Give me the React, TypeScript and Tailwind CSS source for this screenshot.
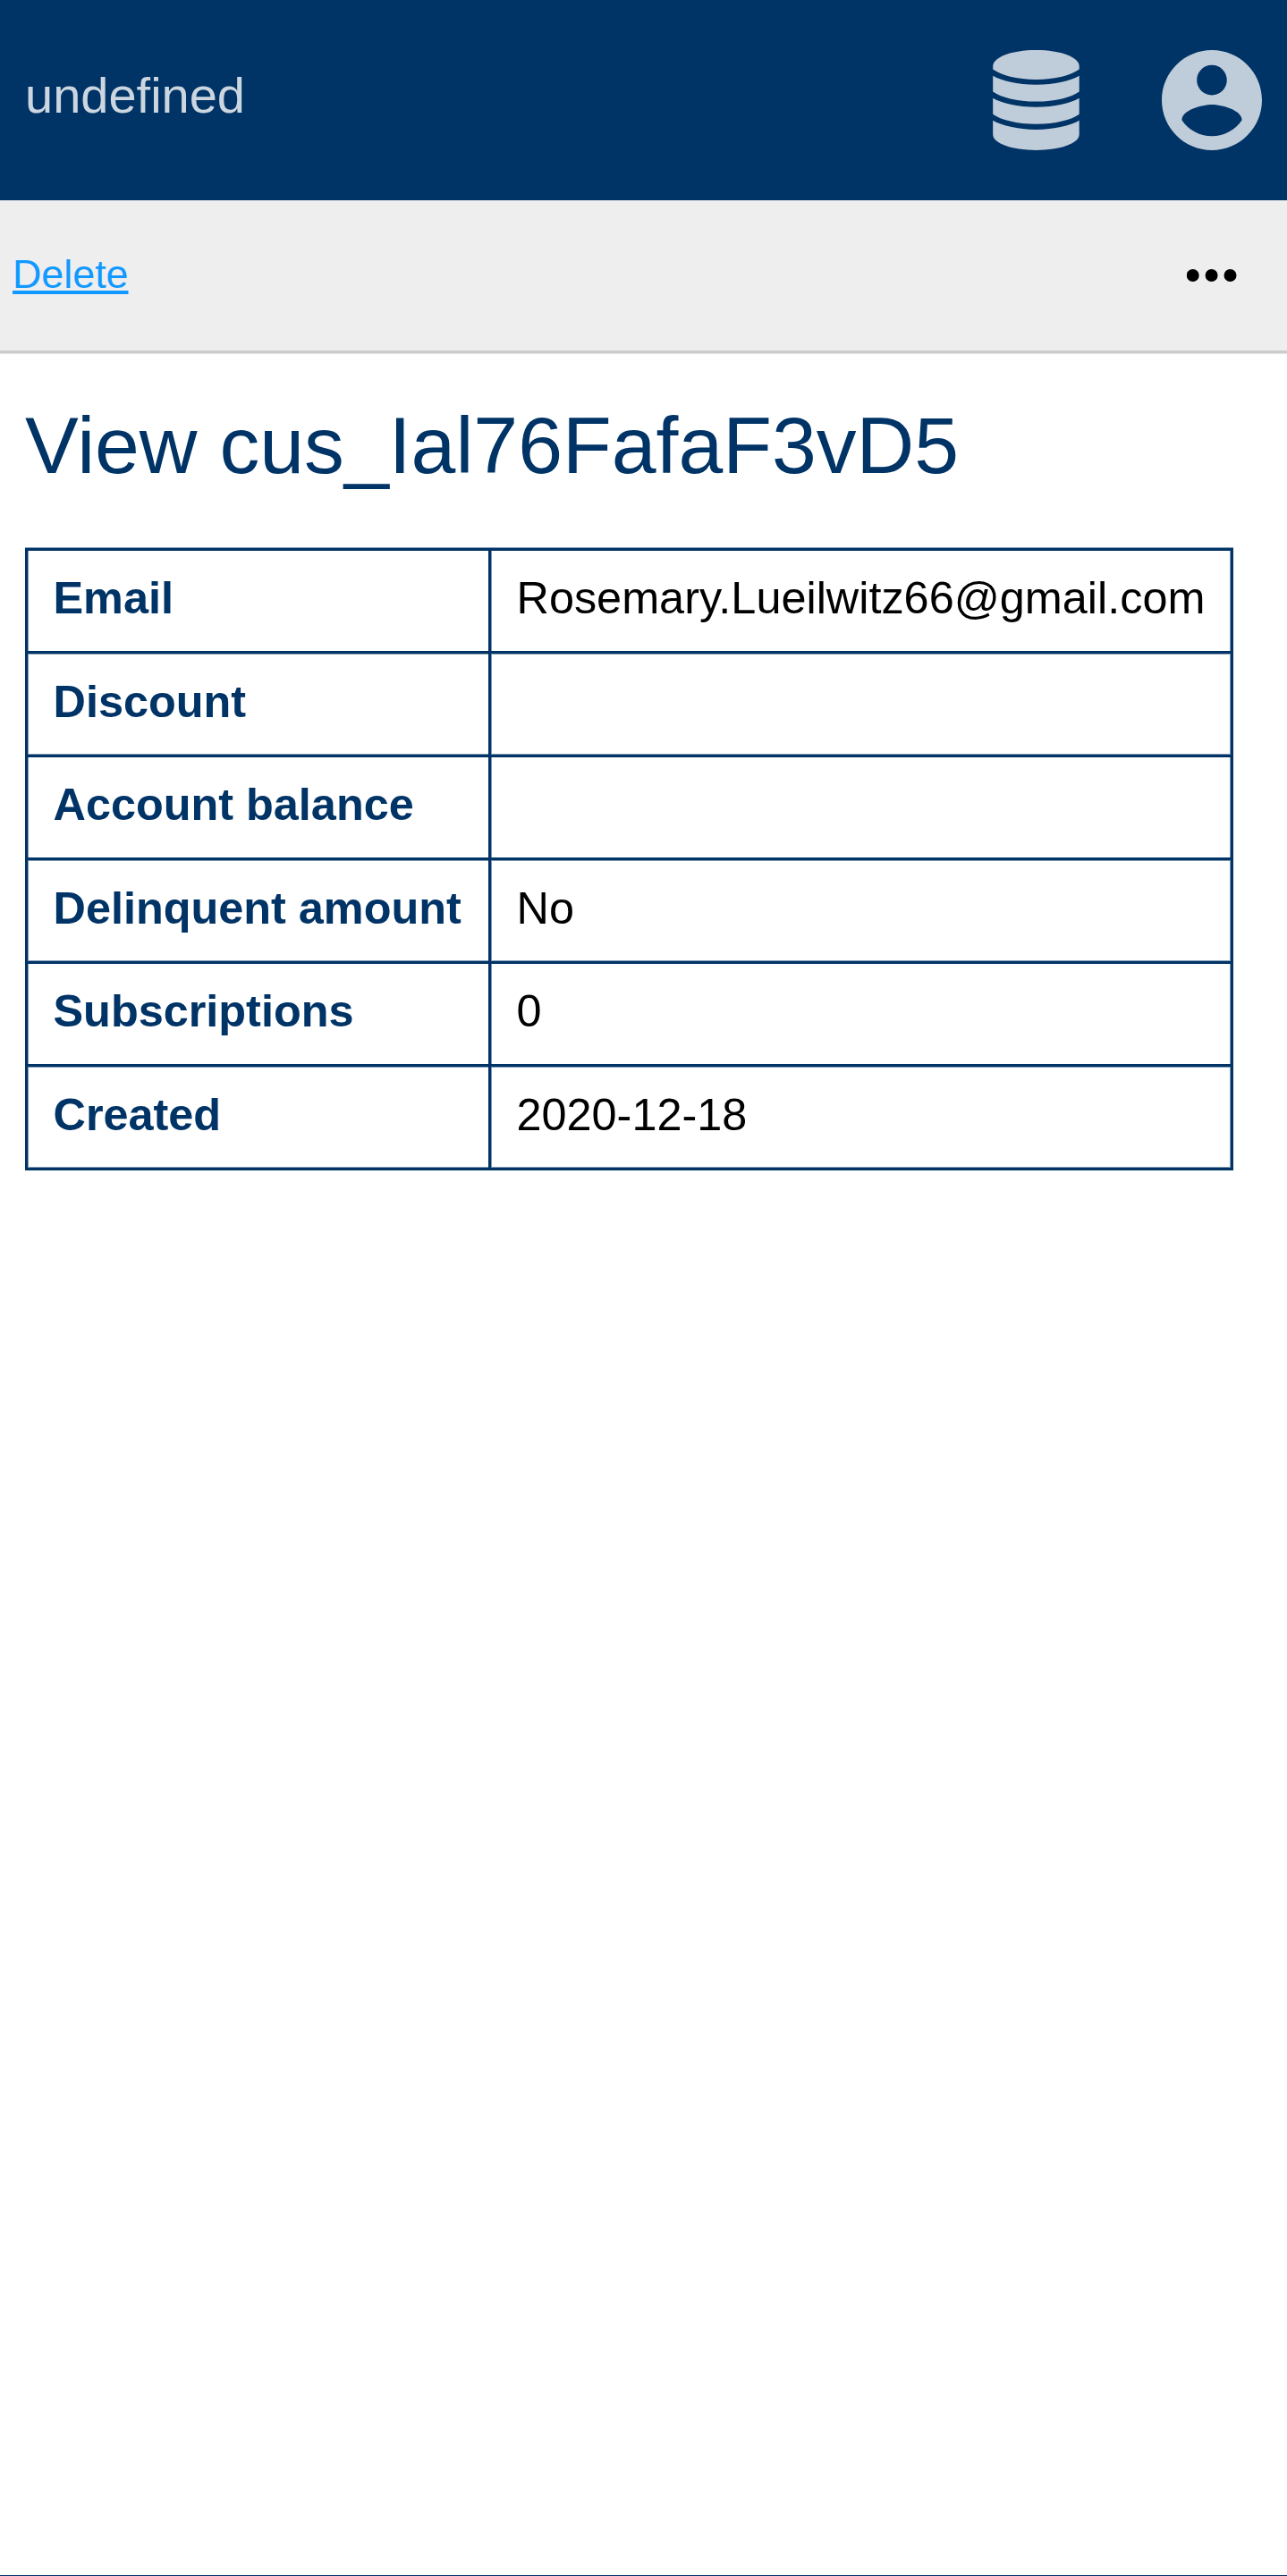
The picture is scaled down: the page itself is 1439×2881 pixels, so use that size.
const rows = [
  { label: 'Email', value: 'Rosemary.Lueilwitz66@gmail.com' },
  { label: 'Discount', value: '' },
  { label: 'Account balance', value: '' },
  { label: 'Delinquent amount', value: 'No' },
  { label: 'Subscriptions', value: '0' },
  { label: 'Created', value: '2020-12-18' },
];

function DatabaseIcon() {
  return (
    <svg className="h-[112px] w-[97px]" viewBox="0 0 97 112" fill="#bfccd9">
      <path d="M0.200 18C0.200 8 21 0 48.500 0S96.700 8 96.700 18V21.500C88 28 70 33 48.500 33S9 28 0.200 21.500Z" />
      <path d="M0.200 28.700C9 34 28 38.700 48.500 38.700S88 34 96.700 28.700V46.500C88 53 70 57.600 48.500 57.600S9 53 0.200 46.500Z" />
      <path d="M0.200 53.800C9 59 28 63.800 48.500 63.800S88 59 96.700 53.800V71.700C88 78 70 82.700 48.500 82.700S9 78 0.200 71.700Z" />
      <path d="M0.200 78.800C9 84 28 89 48.500 89S88 84 96.700 78.800V94.500C96.700 104 76 111.900 48.500 111.900S0.200 104 0.200 94.500Z" />
    </svg>
  );
}

function AccountIcon() {
  return (
    <svg className="h-[112px] w-[112px]" viewBox="2 2 20 20" fill="#bfccd9">
      <path d="M12 2C6.480 2 2 6.480 2 12s4.480 10 10 10 10-4.480 10-10S17.520 2 12 2zm0 3c1.660 0 3 1.340 3 3s-1.340 3-3 3-3-1.340-3-3 1.340-3 3-3zm0 14.200c-2.500 0-4.710-1.280-6-3.220.030-1.990 4-3.080 6-3.080 1.990 0 5.970 1.090 6 3.080-1.290 1.940-3.500 3.220-6 3.220z" />
    </svg>
  );
}

/** Horizontal rule whose inner edge is softened between the column borders. */
function Rule({ soft }: { soft: 'top' | 'bottom' }) {
  const edge = soft === 'top' ? 'border-t border-[#8099b3]' : 'border-b border-[#8099b3]';
  return (
    <div className="flex h-[4px] bg-[#003366] pl-[3px] pr-[3px]">
      <div className={`w-[515px] ${edge}`} />
      <div className={`ml-[3px] w-[827px] ${edge}`} />
    </div>
  );
}

export default function App() {
  return (
    <div className="flex h-[2881px] w-[1439px] flex-col overflow-hidden border-b border-[#003366] bg-white font-['Liberation_Sans',Arial,sans-serif]">
      <header className="flex h-[224px] shrink-0 items-start justify-between bg-[#003366] px-[28px]">
        <div className="mt-[74px] text-[56px] leading-[65px] text-[#ccd6e0]">undefined</div>
        <div className="mt-[56px] flex gap-[92px]">
          <DatabaseIcon />
          <AccountIcon />
        </div>
      </header>
      <nav className="h-[172px] shrink-0 border-b border-[#e5e5e5] bg-[#eeeeee]">
        <div className="flex h-[171px] items-start justify-between border-b-[3px] border-[#cccccc] pl-[14px] pr-[56px]">
          <a className="mt-[56px] text-[44.8px] leading-[52px] text-[#1199ff] underline decoration-[4px] underline-offset-[3px]">Delete</a>
          <svg className="mt-[77px] h-[14px] w-[56px]" viewBox="0 0 56 14">
            <circle cx="6.700" cy="7" r="7" />
            <circle cx="27.600" cy="7" r="7" />
            <circle cx="48.500" cy="7" r="7" />
          </svg>
        </div>
      </nav>
      <main className="px-[28px] pt-[50px]">
        <h1 className="h-[166px] text-[89.6px] leading-[104px] text-[#003366]">View cus_Ial76FafaF3vD5</h1>
        <div className="w-[1351px] text-[50.4px] leading-[59px]">
          <div className="h-[4px] border-t border-[#8099b3] bg-[#003366]" />
          {rows.map((row, i) => (
            <div key={row.label}>
              <div className={i % 2 === 0 ? 'flex h-[112px]' : 'flex h-[111px]'}>
                <div className="w-[4px] border-r border-[#8099b3] bg-[#003366]" />
                <div className="w-[514px] whitespace-nowrap pl-[27.5px] pt-[23px] font-bold text-[#003366]">{row.label}</div>
                <div className="w-[4px] border-r border-[#8099b3] bg-[#003366]" />
                <div className="w-[825px] whitespace-nowrap pl-[27.5px] pt-[23px] text-black">{row.value}</div>
                <div className="w-[4px] border-l border-[#8099b3] bg-[#003366]" />
              </div>
              <Rule soft={i % 2 === 0 ? 'bottom' : 'top'} />
            </div>
          ))}
        </div>
      </main>
    </div>
  );
}
